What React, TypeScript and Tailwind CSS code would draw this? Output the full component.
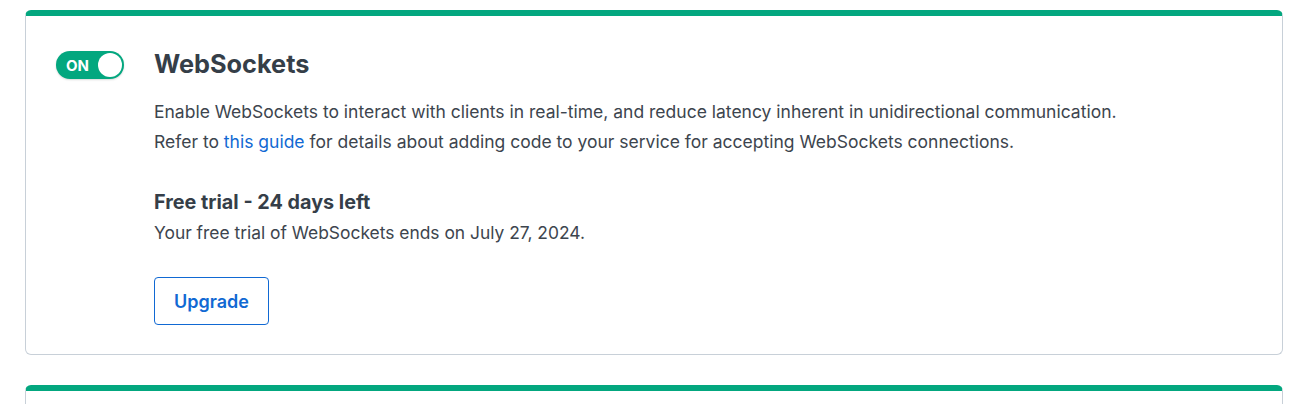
import React from "react";

function Toggle() {
  return (
    <div className="flex h-[28px] w-[68px] shrink-0 items-center justify-between rounded-full bg-[#03a77f] pl-[10px] pr-[2px] shadow-[0_1px_2px_rgba(0,0,0,0.15)]">
      <span className="text-[15px] font-bold leading-none text-white">ON</span>
      <span className="h-[24px] w-[24px] rounded-full bg-white" />
    </div>
  );
}

export default function App() {
  return (
    <div
      className="h-[404px] overflow-hidden bg-white pl-[25px] pr-[13px] pt-[10px] text-[#3d454e]"
      style={{ fontFamily: "Inter, 'Noto Sans', sans-serif" }}
    >
      <div className="rounded-[6px] border-x border-b border-t-[6px] border-[#c8d0d8] border-t-[#03a77f] pb-[29px] pl-[30px] pr-[30px] pt-[32px]">
        <div className="flex gap-[30px]">
          <div className="pt-[3px]">
            <Toggle />
          </div>
          <div className="flex flex-col">
            <h2 className="text-[25.3px] font-bold leading-[32px] text-[#353e48]">WebSockets</h2>
            <div className="mt-[17px] text-[17.5px] leading-[30px]">
              <p>
                Enable WebSockets to interact with clients in real-time, and reduce latency inherent in unidirectional communication.
              </p>
              <p>
                Refer to{" "}
                <a href="#" className="text-[#1169d3]">
                  this guide
                </a>{" "}
                for details about adding code to your service for accepting WebSockets connections.
              </p>
            </div>
            <h3 className="mt-[31px] text-[19.8px] font-bold leading-[28px] text-[#353e48]">
              Free trial - 24 days left
            </h3>
            <p className="mt-[5px] text-[17.4px] leading-[24px]">
              Your free trial of WebSockets ends on July 27, 2024.
            </p>
            <div className="mt-[32px]">
              <button className="h-[48px] w-[115px] rounded-[4px] border border-[#1169d3] bg-white text-[18px] font-semibold text-[#1169d3]">
                Upgrade
              </button>
            </div>
          </div>
        </div>
      </div>
      <div className="mt-[30px] h-[19px] rounded-t-[6px] border-x border-t-[6px] border-[#c8d0d8] border-t-[#03a77f]" />
    </div>
  );
}
